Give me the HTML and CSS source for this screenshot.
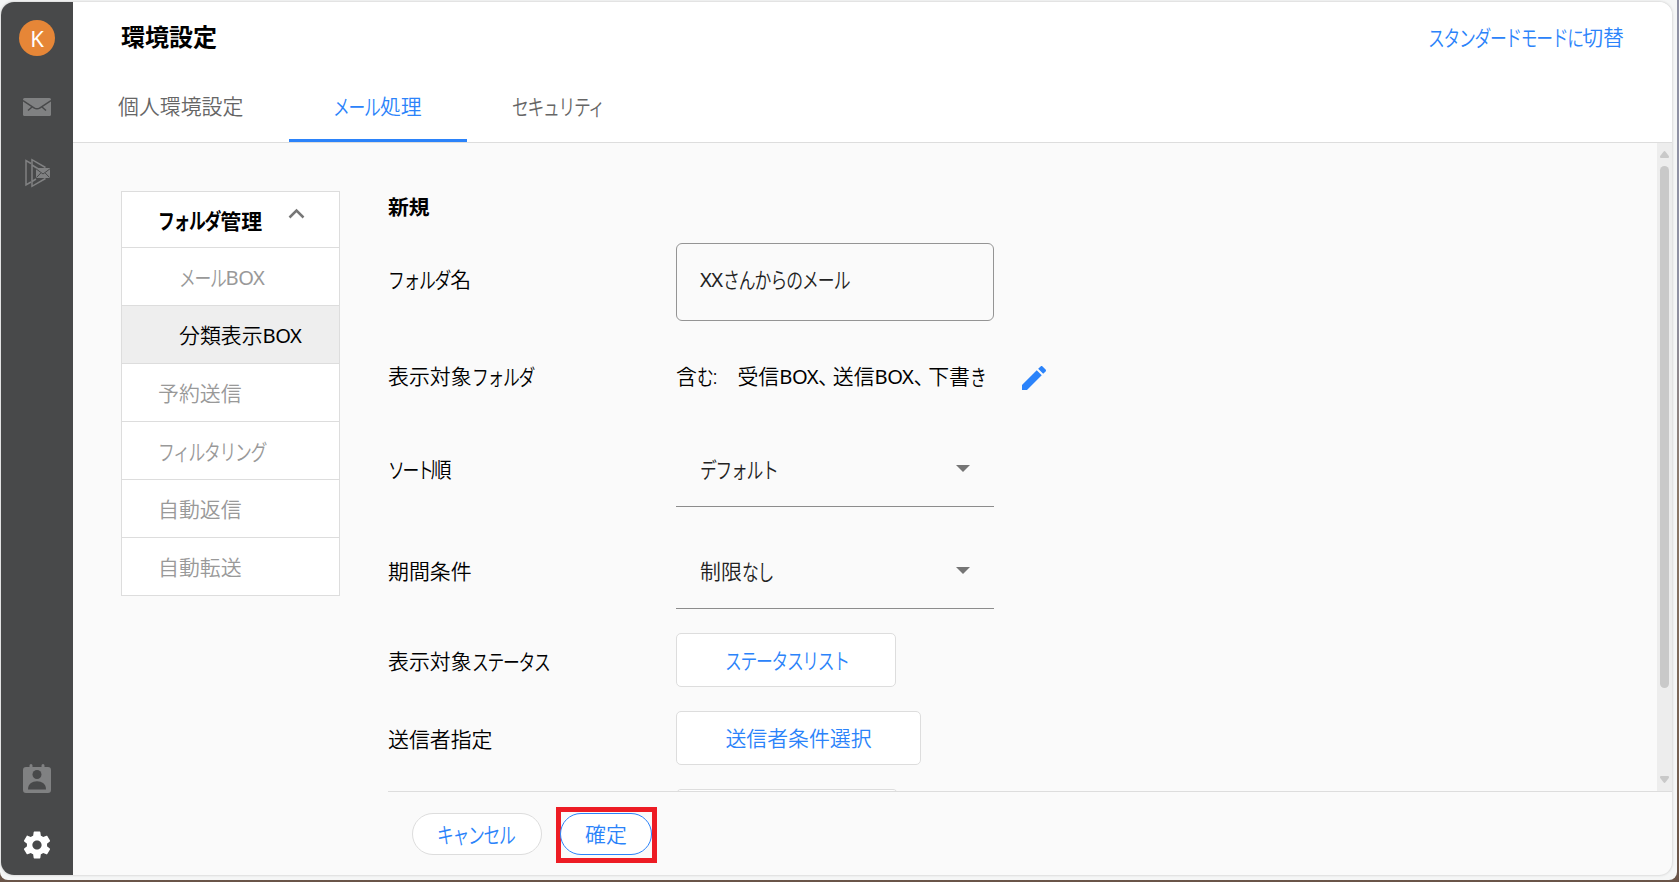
FILE: index.html
```html
<!DOCTYPE html>
<html lang="ja">
<head>
    <meta charset="UTF-8">
    <meta name="viewport" content="width=device-width, initial-scale=1.0">
    <title>環境設定</title>
    <link rel="stylesheet" href="styles.css">
</head>
<body>
    <div class="frame">
        <div class="window">
            <nav class="sidebar">
                <div class="avatar">K</div>
                <svg class="icon-mail" width="28" height="18" viewBox="0 0 28 18">
                    <rect width="28" height="18" rx="1.5" fill="#808182"/>
                    <path d="M0 2.500L11 9.800Q14 11.800 17 9.800L28 2.500M9.300 8.700L5 12.500M18.700 8.700L23 12.500" fill="none" stroke="#48494a" stroke-width="1.500"/>
                </svg>
                <svg class="icon-send" width="26" height="30" viewBox="0 0 26 30">
                    <path d="M6 5.500L1 2.500V27L6 24" fill="none" stroke="#808182" stroke-width="1.500"/>
                    <path d="M20.500 9.500L7 1.700V28.300L20.500 20.500M7 7L15 12M7 23.500L11 21" fill="none" stroke="#808182" stroke-width="1.500"/>
                    <rect x="11" y="10" width="14" height="10" fill="#808182"/>
                    <path d="M11 10.800L18 16L25 10.800M11.500 19.500L15.800 15M24.500 19.500L20.200 15" fill="none" stroke="#48494a"/>
                </svg>
                <svg class="icon-contact" width="28" height="29" viewBox="0 0 28 29">
                    <path d="M3 3H6.500V1.500a1.500 1.500 0 0 1 3 0V3h9V1.500a1.500 1.500 0 0 1 3 0V3H25a3 3 0 0 1 3 3V26a3 3 0 0 1-3 3H3a3 3 0 0 1-3-3V6a3 3 0 0 1 3-3Z" fill="#808182"/>
                    <circle cx="14" cy="10.500" r="4.500" fill="#48494a"/>
                    <path d="M5 25.500C5 20 9 17.300 14 17.300S23 20 23 25.500Z" fill="#48494a"/>
                </svg>
                <svg class="icon-gear" width="28" height="28" viewBox="2 2 20 20">
                    <path d="M19.140 12.940c.04-.3.06-.61.06-.94 0-.32-.02-.64-.07-.94l2.030-1.580c.18-.14.23-.41.12-.61l-1.920-3.320c-.12-.22-.37-.29-.59-.22l-2.390.96c-.5-.38-1.030-.7-1.620-.94l-.36-2.540c-.04-.24-.24-.41-.48-.41h-3.840c-.24 0-.43.17-.47.41l-.36 2.540c-.59.24-1.130.57-1.620.94l-2.390-.96c-.22-.08-.47 0-.59.22L2.740 8.870c-.12.21-.08.47.12.61l2.030 1.580c-.05.3-.09.63-.09.94s.02.64.07.94l-2.030 1.580c-.18.14-.23.41-.12.61l1.920 3.320c.12.22.37.29.59.22l2.390-.96c.5.38 1.030.7 1.620.94l.36 2.540c.05.24.24.41.48.41h3.840c.24 0 .44-.17.47-.41l.36-2.540c.59-.24 1.130-.56 1.620-.94l2.390.96c.22.08.47 0 .59-.22l1.920-3.320c.12-.22.07-.47-.12-.61l-2.010-1.580zM12 15.300c-1.820 0-3.300-1.480-3.300-3.300s1.480-3.300 3.300-3.300 3.300 1.480 3.300 3.300-1.480 3.300-3.300 3.300z" fill="#fff"/>
                </svg>
            </nav>

            <div class="main">
                <header class="header">
                    <div class="title-row">
                        <h1>環境設定</h1>
                        <a class="mode-link"><span class="kana k10">スタンダードモードに</span>切替</a>
                    </div>
                    <div class="tabs">
                        <div class="tab">個人環境設定</div>
                        <div class="tab active"><span class="kana k3">メール</span>処理</div>
                        <div class="tab"><span class="kana k6">セキュリティ</span></div>
                    </div>
                </header>

                <div class="content">
                    <aside class="side">
                        <ul class="menu">
                            <li class="group"><span class="kana k4">フォルダ</span>管理
                                <svg class="chevron" width="17" height="11" viewBox="0 0 17 11">
                                    <path d="M1.500 9.500L8.500 2.500L15.500 9.500" fill="none" stroke="#777" stroke-width="2.500"/>
                                </svg>
                            </li>
                            <li class="sub"><span class="kana k3">メール</span><span class="latin">BOX</span></li>
                            <li class="sub selected">分類表示<span class="latin">BOX</span></li>
                            <li>予約送信</li>
                            <li><span class="kana k7">フィルタリング</span></li>
                            <li>自動返信</li>
                            <li>自動転送</li>
                        </ul>
                    </aside>

                    <section class="panel">
                        <div class="scroll-area">
                            <div class="form">
                                <h2>新規</h2>
                                <div class="row row-name">
                                    <div class="label"><span class="kana k4">フォルダ</span>名</div>
                                    <div class="text-box"><span class="latin">XX</span><span class="kana k8">さんからのメール</span></div>
                                </div>
                                <div class="row row-folder">
                                    <div class="label">表示対象<span class="kana k4">フォルダ</span></div>
                                    <div class="folders">含<span class="kana k1">む</span><span class="colon">:</span>受信<span class="latin">BOX</span><span class="comma">、</span>送信<span class="latin">BOX</span><span class="comma">、</span>下書<span class="kana k1">き</span></div>
                                    <svg class="pencil" width="24" height="24" viewBox="3 3 18 18">
                                        <path d="M3 17.250V21h3.750L17.810 9.940l-3.750-3.750L3 17.250zM20.710 7.040c.39-.39.39-1.020 0-1.410l-2.340-2.340c-.39-.39-1.020-.39-1.410 0l-1.830 1.830 3.750 3.750 1.830-1.830z" fill="#2b83fa"/>
                                    </svg>
                                </div>
                                <div class="row row-sort">
                                    <div class="label"><span class="kana k3">ソート</span>順</div>
                                    <div class="select"><span><span class="kana k5">デフォルト</span></span><i class="caret"></i></div>
                                </div>
                                <div class="row row-period">
                                    <div class="label">期間条件</div>
                                    <div class="select"><span>制限<span class="kana k2">なし</span></span><i class="caret"></i></div>
                                </div>
                                <div class="row">
                                    <div class="label">表示対象<span class="kana k5">ステータス</span></div>
                                    <button class="btn btn-status"><span class="kana k8">ステータスリスト</span></button>
                                </div>
                                <div class="row">
                                    <div class="label">送信者指定</div>
                                    <button class="btn btn-sender">送信者条件選択</button>
                                </div>
                                <div class="row">
                                    <div class="label"></div>
                                    <button class="btn btn-next"></button>
                                </div>
                            </div>
                            <div class="scrollbar">
                                <svg width="9" height="7" viewBox="0 0 9 7"><path d="M3.500 .7Q4.500-.5 5.500 .7L8.800 5Q9.500 7 8 7H1Q-.5 7 .2 5Z" fill="#c9c9c9"/></svg>
                                <div class="thumb"></div>
                                <svg width="9" height="7" viewBox="0 0 9 7"><path d="M3.500 6.300Q4.500 7.500 5.500 6.300L8.800 2Q9.500 0 8 0H1Q-.5 0 .2 2Z" fill="#c9c9c9"/></svg>
                            </div>
                        </div>
                        <footer class="footer">
                            <button class="pill"><span class="kana k5">キャンセル</span></button>
                            <div class="highlight"><button class="pill primary">確定</button></div>
                        </footer>
                    </section>
                </div>
            </div>
        </div>
    </div>
</body>
</html>
```

FILE: styles.css
```css
* {
    box-sizing: border-box;
}
body {
    margin: 0;
    height: 882px;
    overflow: hidden;
    background: linear-gradient(#8f91a3 0, #8f91a3 300px, #8b7868 500px, #6a5549 100%);
    font-family: "Noto Sans CJK JP", sans-serif;
    font-size: 20.9px;
    font-weight: 350;
    line-height: 30px;
    color: #000;
}
.frame {
    width: 1677px;
    height: 880px;
    padding: 2px 5px 5px 1px;
    background: #f5f6f6;
    border-radius: 0 0 8px 8px;
}
.window {
    display: flex;
    height: 873px;
    border-radius: 13px;
    overflow: hidden;
    background: #fafafa;
    box-shadow: 0 0 2px 1px #dcdcdc;
}

/* kana is set narrower than kanji */
.kana {
    display: inline-block;
    white-space: nowrap;
    letter-spacing: -0.08em;
    transform: scale(0.805, 1.06);
    transform-origin: 0 50%;
}
.k1 { margin-right: -0.175em; }
.k2 { margin-right: -0.35em; }
.k3 { margin-right: -0.53em; }
.k4 { margin-right: -0.7em; }
.k5 { margin-right: -0.875em; }
.k6 { margin-right: -1.05em; }
.k7 { margin-right: -1.225em; }
.k8 { margin-right: -1.4em; }
.k10 { margin-right: -1.8em; }
.latin {
    font-family: "Noto Sans", sans-serif;
    font-weight: 400;
    font-size: 20.2px;
    letter-spacing: -0.5px;
}

.sidebar {
    width: 72px;
    display: flex;
    flex-direction: column;
    align-items: center;
    padding: 18px 0 16px;
    background: #48494a;
}
.avatar {
    width: 36px;
    height: 36px;
    border-radius: 50%;
    background: #e68637;
    color: #fff;
    font: 400 22px/37px "Noto Sans", sans-serif;
    text-align: center;
}
.icon-mail {
    margin-top: 42px;
}
.icon-send {
    margin: 42px 0 0 2px;
}
.icon-contact {
    margin-top: auto;
}
.icon-gear {
    margin-top: 38px;
}

.main {
    flex: 1;
    display: flex;
    flex-direction: column;
}
.header {
    height: 141px;
    background: #fff;
    border-bottom: 1px solid #ddd;
}
.title-row {
    display: flex;
    justify-content: space-between;
    align-items: center;
    height: 70px;
    padding: 0 48px 2px;
}
h1 {
    margin: 0;
    font-size: 24px;
    font-weight: 700;
}
.mode-link {
    color: #2b83fa;
}
.tabs {
    display: flex;
    height: 70px;
}
.tab {
    padding: 18px 45px 0;
    color: #666;
}
.tab:first-child {
    padding-right: 46px;
}
.tab.active {
    padding-left: 44px;
    color: #2b83fa;
    border-bottom: 3px solid #2b83fa;
}

.content {
    flex: 1;
    display: flex;
    min-height: 0;
}
.side {
    width: 315px;
    padding: 48px 48px 0;
}
.menu {
    list-style: none;
    width: 219px;
    margin: 0;
    padding: 0;
    background: #fff;
    border: 1px solid #ddd;
    color: #999;
}
.menu li {
    height: 58px;
    padding: 13px 0 0 36px;
    border-bottom: 1px solid #ddd;
}
.menu li:last-child {
    height: 57px;
    border-bottom: 0;
}
.menu .group {
    height: 56px;
    display: flex;
    color: #000;
    font-weight: 700;
}
.chevron {
    margin: 3px 0 0 26px;
}
.menu .sub {
    padding-left: 57px;
}
.menu .selected {
    background: #eee;
    color: #000;
}

.panel {
    flex: 1;
    display: flex;
    flex-direction: column;
}
.scroll-area {
    height: 648px;
    display: flex;
    overflow: hidden;
}
.form {
    flex: 1;
}
h2 {
    margin: 48px 0 22px;
    font-size: 20.8px;
    font-weight: 700;
}
.row {
    display: flex;
    align-items: center;
    height: 54px;
    margin-bottom: 24px;
}
.label {
    width: 288px;
}
.row-name {
    height: 78px;
}
.row-name .label {
    padding-bottom: 8px;
}
.text-box {
    width: 318px;
    height: 78px;
    padding: 19px 23px;
    border: 1px solid #949494;
    border-radius: 6px;
    color: #222;
}
.text-box .kana {
    letter-spacing: -0.06em;
}
.row-folder {
    height: 62px;
}
.row-folder .label,
.folders {
    padding-bottom: 2px;
}
.folders {
    width: 346px;
    white-space: nowrap;
}
.colon {
    display: inline-block;
    width: 25px;
    font-family: "Noto Sans", sans-serif;
}
.comma {
    letter-spacing: -6.2px;
}
.pencil {
    margin-top: 4px;
}
.row-sort {
    height: 76px;
    margin-bottom: 26px;
}
.row-sort .label,
.row-period .label {
    padding-bottom: 2px;
}
.row-sort .label .kana {
    letter-spacing: -0.14em;
}
.row-period {
    height: 76px;
}
.select {
    width: 318px;
    height: 76px;
    display: flex;
    justify-content: space-between;
    align-items: center;
    padding: 0 24px 1px;
    border-bottom: 1px solid #8c8c8c;
    color: #222;
}
.caret {
    border: 7px solid transparent;
    border-top-color: #757575;
    border-bottom: 0;
}
button {
    background: #fff;
    border: 1px solid #ddd;
    color: #2b83fa;
    font: inherit;
    cursor: pointer;
}
.btn {
    height: 54px;
    padding: 0 48px 2px;
    border-radius: 5px;
}
.btn-status {
    width: 220px;
}
.btn-sender {
    width: 245px;
}
.btn-next {
    width: 222px;
}
.scrollbar {
    width: 15px;
    display: flex;
    flex-direction: column;
    align-items: center;
    padding: 8px 0;
    background: #ededed;
}
.thumb {
    width: 9px;
    height: 522px;
    margin: 8px 0 auto;
    border-radius: 5px;
    background: #c9c9c9;
}

.footer {
    display: flex;
    height: 84px;
    padding: 15px 24px 0;
    border-top: 1px solid #ddd;
}
.pill {
    width: 130px;
    height: 42px;
    margin-top: 6px;
    padding: 0 0 2px 24px;
    border-radius: 21px;
    text-align: left;
}
.highlight {
    width: 101px;
    height: 56px;
    margin-left: 14px;
    border: 5px solid #ed1c24;
}
.pill.primary {
    width: 92px;
    margin: 1px 0 0 -1px;
    border-color: #2b83fa;
}
```
